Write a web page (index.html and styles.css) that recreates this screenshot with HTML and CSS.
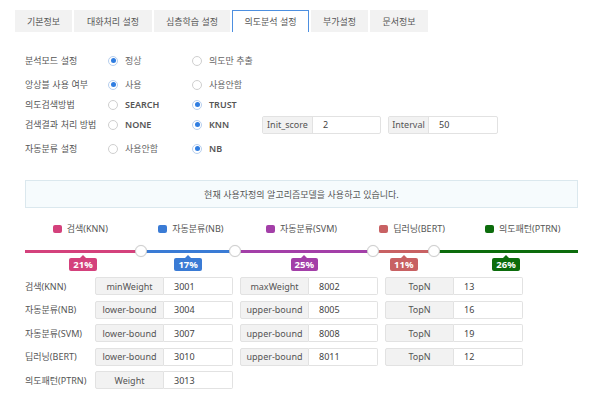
FILE: index.html
```html
<!DOCTYPE html>
<html lang="ko">
<head>
<meta charset="utf-8">
<link rel="stylesheet" href="styles.css">
</head>
<body>
<div class="page">
  <div class="tabs">
    <div class="tab w57">기본정보</div>
    <div class="tab w78">대화처리 설정</div>
    <div class="tab w76">심층학습 설정</div>
    <div class="tab w77 active">의도분석 설정</div>
    <div class="tab w57">부가설정</div>
    <div class="tab w58">문서정보</div>
  </div>

  <div class="form">
    <div class="row">
      <div class="flabel">분석모드 설정</div>
      <div class="radio on"><span class="dot"></span>정상</div>
      <div class="radio"><span class="dot"></span>의도만 추출</div>
    </div>
    <div class="row gap">
      <div class="flabel">앙상블 사용 여부</div>
      <div class="radio on"><span class="dot"></span>사용</div>
      <div class="radio"><span class="dot"></span>사용안함</div>
    </div>
    <div class="row tight">
      <div class="flabel">의도검색방법</div>
      <div class="radio en"><span class="dot"></span>SEARCH</div>
      <div class="radio on en"><span class="dot"></span>TRUST</div>
    </div>
    <div class="row tight">
      <div class="flabel">검색결과 처리 방법</div>
      <div class="radio en"><span class="dot"></span>NONE</div>
      <div class="radio on en"><span class="dot"></span>KNN</div>
      <div class="igroups">
        <div class="igroup w119"><span class="il w50">Init_score</span><span class="iv">2</span></div>
        <div class="igroup w110"><span class="il w40">Interval</span><span class="iv">50</span></div>
      </div>
    </div>
    <div class="row gap">
      <div class="flabel">자동분류 설정</div>
      <div class="radio"><span class="dot"></span>사용안함</div>
      <div class="radio on en"><span class="dot"></span>NB</div>
    </div>
  </div>

  <div class="info">현재 사용자정의 알고리즘모델을 사용하고 있습니다.</div>

  <div class="legend">
    <div class="litem"><span class="sq pink"></span>검색(KNN)</div>
    <div class="litem"><span class="sq blue"></span>자동분류(NB)</div>
    <div class="litem"><span class="sq purple"></span>자동분류(SVM)</div>
    <div class="litem"><span class="sq red"></span>딥러닝(BERT)</div>
    <div class="litem"><span class="sq green"></span>의도패턴(PTRN)</div>
  </div>

  <div class="slider">
    <div class="seg pink" style="width:21%"><div class="track"><div class="line"></div><span class="handle"></span></div><div class="badge">21%</div></div>
    <div class="seg blue" style="width:17%"><div class="track"><div class="line"></div><span class="handle"></span></div><div class="badge">17%</div></div>
    <div class="seg purple" style="width:25%"><div class="track"><div class="line"></div><span class="handle"></span></div><div class="badge">25%</div></div>
    <div class="seg red" style="width:11%"><div class="track"><div class="line"></div><span class="handle"></span></div><div class="badge">11%</div></div>
    <div class="seg green" style="width:26%"><div class="track"><div class="line"></div></div><div class="badge">26%</div></div>
  </div>

  <div class="table">
    <div class="trow">
      <div class="rlabel">검색(KNN)</div>
      <div class="group"><span class="gl">minWeight</span><span class="gv">3001</span></div>
      <div class="group"><span class="gl">maxWeight</span><span class="gv">8002</span></div>
      <div class="group"><span class="gl">TopN</span><span class="gv">13</span></div>
    </div>
    <div class="trow">
      <div class="rlabel">자동분류(NB)</div>
      <div class="group"><span class="gl">lower-bound</span><span class="gv">3004</span></div>
      <div class="group"><span class="gl">upper-bound</span><span class="gv">8005</span></div>
      <div class="group"><span class="gl">TopN</span><span class="gv">16</span></div>
    </div>
    <div class="trow">
      <div class="rlabel">자동분류(SVM)</div>
      <div class="group"><span class="gl">lower-bound</span><span class="gv">3007</span></div>
      <div class="group"><span class="gl">upper-bound</span><span class="gv">8008</span></div>
      <div class="group"><span class="gl">TopN</span><span class="gv">19</span></div>
    </div>
    <div class="trow">
      <div class="rlabel">딥러닝(BERT)</div>
      <div class="group"><span class="gl">lower-bound</span><span class="gv">3010</span></div>
      <div class="group"><span class="gl">upper-bound</span><span class="gv">8011</span></div>
      <div class="group"><span class="gl">TopN</span><span class="gv">12</span></div>
    </div>
    <div class="trow">
      <div class="rlabel">의도패턴(PTRN)</div>
      <div class="group"><span class="gl">Weight</span><span class="gv">3013</span></div>
    </div>
  </div>
</div>
</body>
</html>
```

FILE: styles.css
```css
* { box-sizing: border-box; }
html, body { margin: 0; padding: 0; background: #fff; }
body {
  font-family: "Noto Sans", "Noto Sans CJK KR", sans-serif;
  font-size: 9px;
  color: #555;
  width: 600px;
  height: 401px;
  overflow: hidden;
}
.page { padding-top: 10px; }

/* tabs */
.tabs { display: flex; gap: 2px; margin-left: 15px; height: 22px; }
.tab {
  height: 22px;
  background: #f2f2f2;
  color: #555;
  display: flex;
  align-items: center;
  justify-content: center;
  font-family: "Noto Sans CJK KR", sans-serif;
}
.tab.active {
  background: #fff;
  border: 1.5px solid #4d8fe0;
  border-bottom: none;
  color: #555;
}
.w57 { width: 57px; }
.w58 { width: 58px; }
.w76 { width: 76px; }
.w77 { width: 77px; }
.w78 { width: 78px; }

/* form */
.form { margin-top: 19px; padding-left: 25px; display: flex; flex-direction: column; }
.row { display: flex; align-items: center; height: 19px; }
.row.gap { margin-top: 5px; }
.row.tight { margin-top: 1px; }
.flabel { width: 83px; font-family: "Noto Sans CJK KR", sans-serif; color: #555; }
.radio { display: flex; align-items: center; gap: 7px; color: #666; }
.radio:nth-of-type(2) { width: 84px; }
.radio:nth-of-type(3) { width: 70px; }
.radio.en { font-weight: 600; color: #555; }
.dot {
  width: 10px; height: 10px; border-radius: 50%;
  border: 1px solid #cfcfcf; background: #fff;
  display: flex; align-items: center; justify-content: center;
}
.radio.on .dot { border-color: #b7cfee; }
.radio.on .dot::after {
  content: ""; width: 5px; height: 5px; border-radius: 50%; background: #2f7de1;
}
.igroups { display: flex; gap: 7px; }
.igroup {
  display: flex; height: 18px;
  border: 1px solid #e2e2e2; border-radius: 2px; background: #fff;
}
.w119 { width: 119px; }
.w110 { width: 110px; }
.w50 { width: 50px; }
.w40 { width: 40px; }
.il {
  background: #f2f2f2; border-right: 1px solid #e2e2e2;
  display: flex; align-items: center; justify-content: center;
  color: #555;
}
.iv { display: flex; align-items: center; padding-left: 10px; color: #444; }

/* info */
.info {
  margin: 22px 0 0 25px; width: 553px; height: 28px;
  background: #f6fbfd; border: 1px solid #dbe8ee;
  display: flex; align-items: center; justify-content: center;
  font-family: "Noto Sans CJK KR", sans-serif; color: #555;
}

/* legend */
.legend {
  margin: 14px 0 0 25px; width: 553px;
  display: grid; grid-template-columns: repeat(5, 1fr);
  height: 10px;
}
.litem { display: flex; align-items: center; justify-content: center; gap: 5px; color: #555; }
.sq { width: 9px; height: 8px; border-radius: 2px; }
.sq.pink, .seg.pink .line, .seg.pink .badge { background: #d4417c; }
.sq.blue, .seg.blue .line, .seg.blue .badge { background: #3a7bd5; }
.sq.purple, .seg.purple .line, .seg.purple .badge { background: #a33fa8; }
.sq.red, .seg.red .line, .seg.red .badge { background: #c86163; }
.sq.green, .seg.green .line, .seg.green .badge { background: #0c6c0c; }
.seg.pink .badge::before { border-bottom-color: #d4417c; }
.seg.blue .badge::before { border-bottom-color: #3a7bd5; }
.seg.purple .badge::before { border-bottom-color: #a33fa8; }
.seg.red .badge::before { border-bottom-color: #c86163; }
.seg.green .badge::before { border-bottom-color: #0c6c0c; }

/* slider */
.slider { margin: 14px 0 0 25px; width: 553px; display: flex; }
.seg { display: flex; flex-direction: column; align-items: center; }
.track { position: relative; width: 100%; height: 10px; display: flex; align-items: center; }
.line { width: 100%; height: 3px; }
.handle {
  position: absolute; right: -6px; top: -1px;
  width: 12px; height: 12px; border-radius: 50%;
  background: #fff; border: 1px solid #cfcfcf;
  box-shadow: 0 0 1px rgba(0,0,0,0.15);
  z-index: 2;
}
.badge {
  position: relative;
  margin-top: 2px;
  height: 13px; padding: 0 4px;
  border-radius: 2px;
  color: #fff; font-weight: 700; font-size: 9.5px;
  display: flex; align-items: center;
  font-family: "Noto Sans", sans-serif;
}
.badge::before {
  content: ""; position: absolute; left: 50%; top: -3px; margin-left: -3px;
  border-left: 3px solid transparent; border-right: 3px solid transparent;
  border-bottom: 3px solid transparent;
}

/* table */
.table { margin: 6px 0 0 25px; display: flex; flex-direction: column; gap: 5.5px; }
.trow { display: flex; align-items: center; height: 18px; }
.rlabel { width: 70px; color: #555; }
.group { display: flex; width: 138px; height: 18px; margin-right: 7px; }
.gl {
  width: 69px; background: #f2f2f2; border: 1px solid #e2e2e2; border-radius: 2px 0 0 2px;
  display: flex; align-items: center; justify-content: center; color: #555;
}
.gv {
  flex: 1; background: #fff; border: 1px solid #e2e2e2; border-left: none; border-radius: 0 2px 2px 0;
  display: flex; align-items: center; padding-left: 10px; color: #444;
}
```
